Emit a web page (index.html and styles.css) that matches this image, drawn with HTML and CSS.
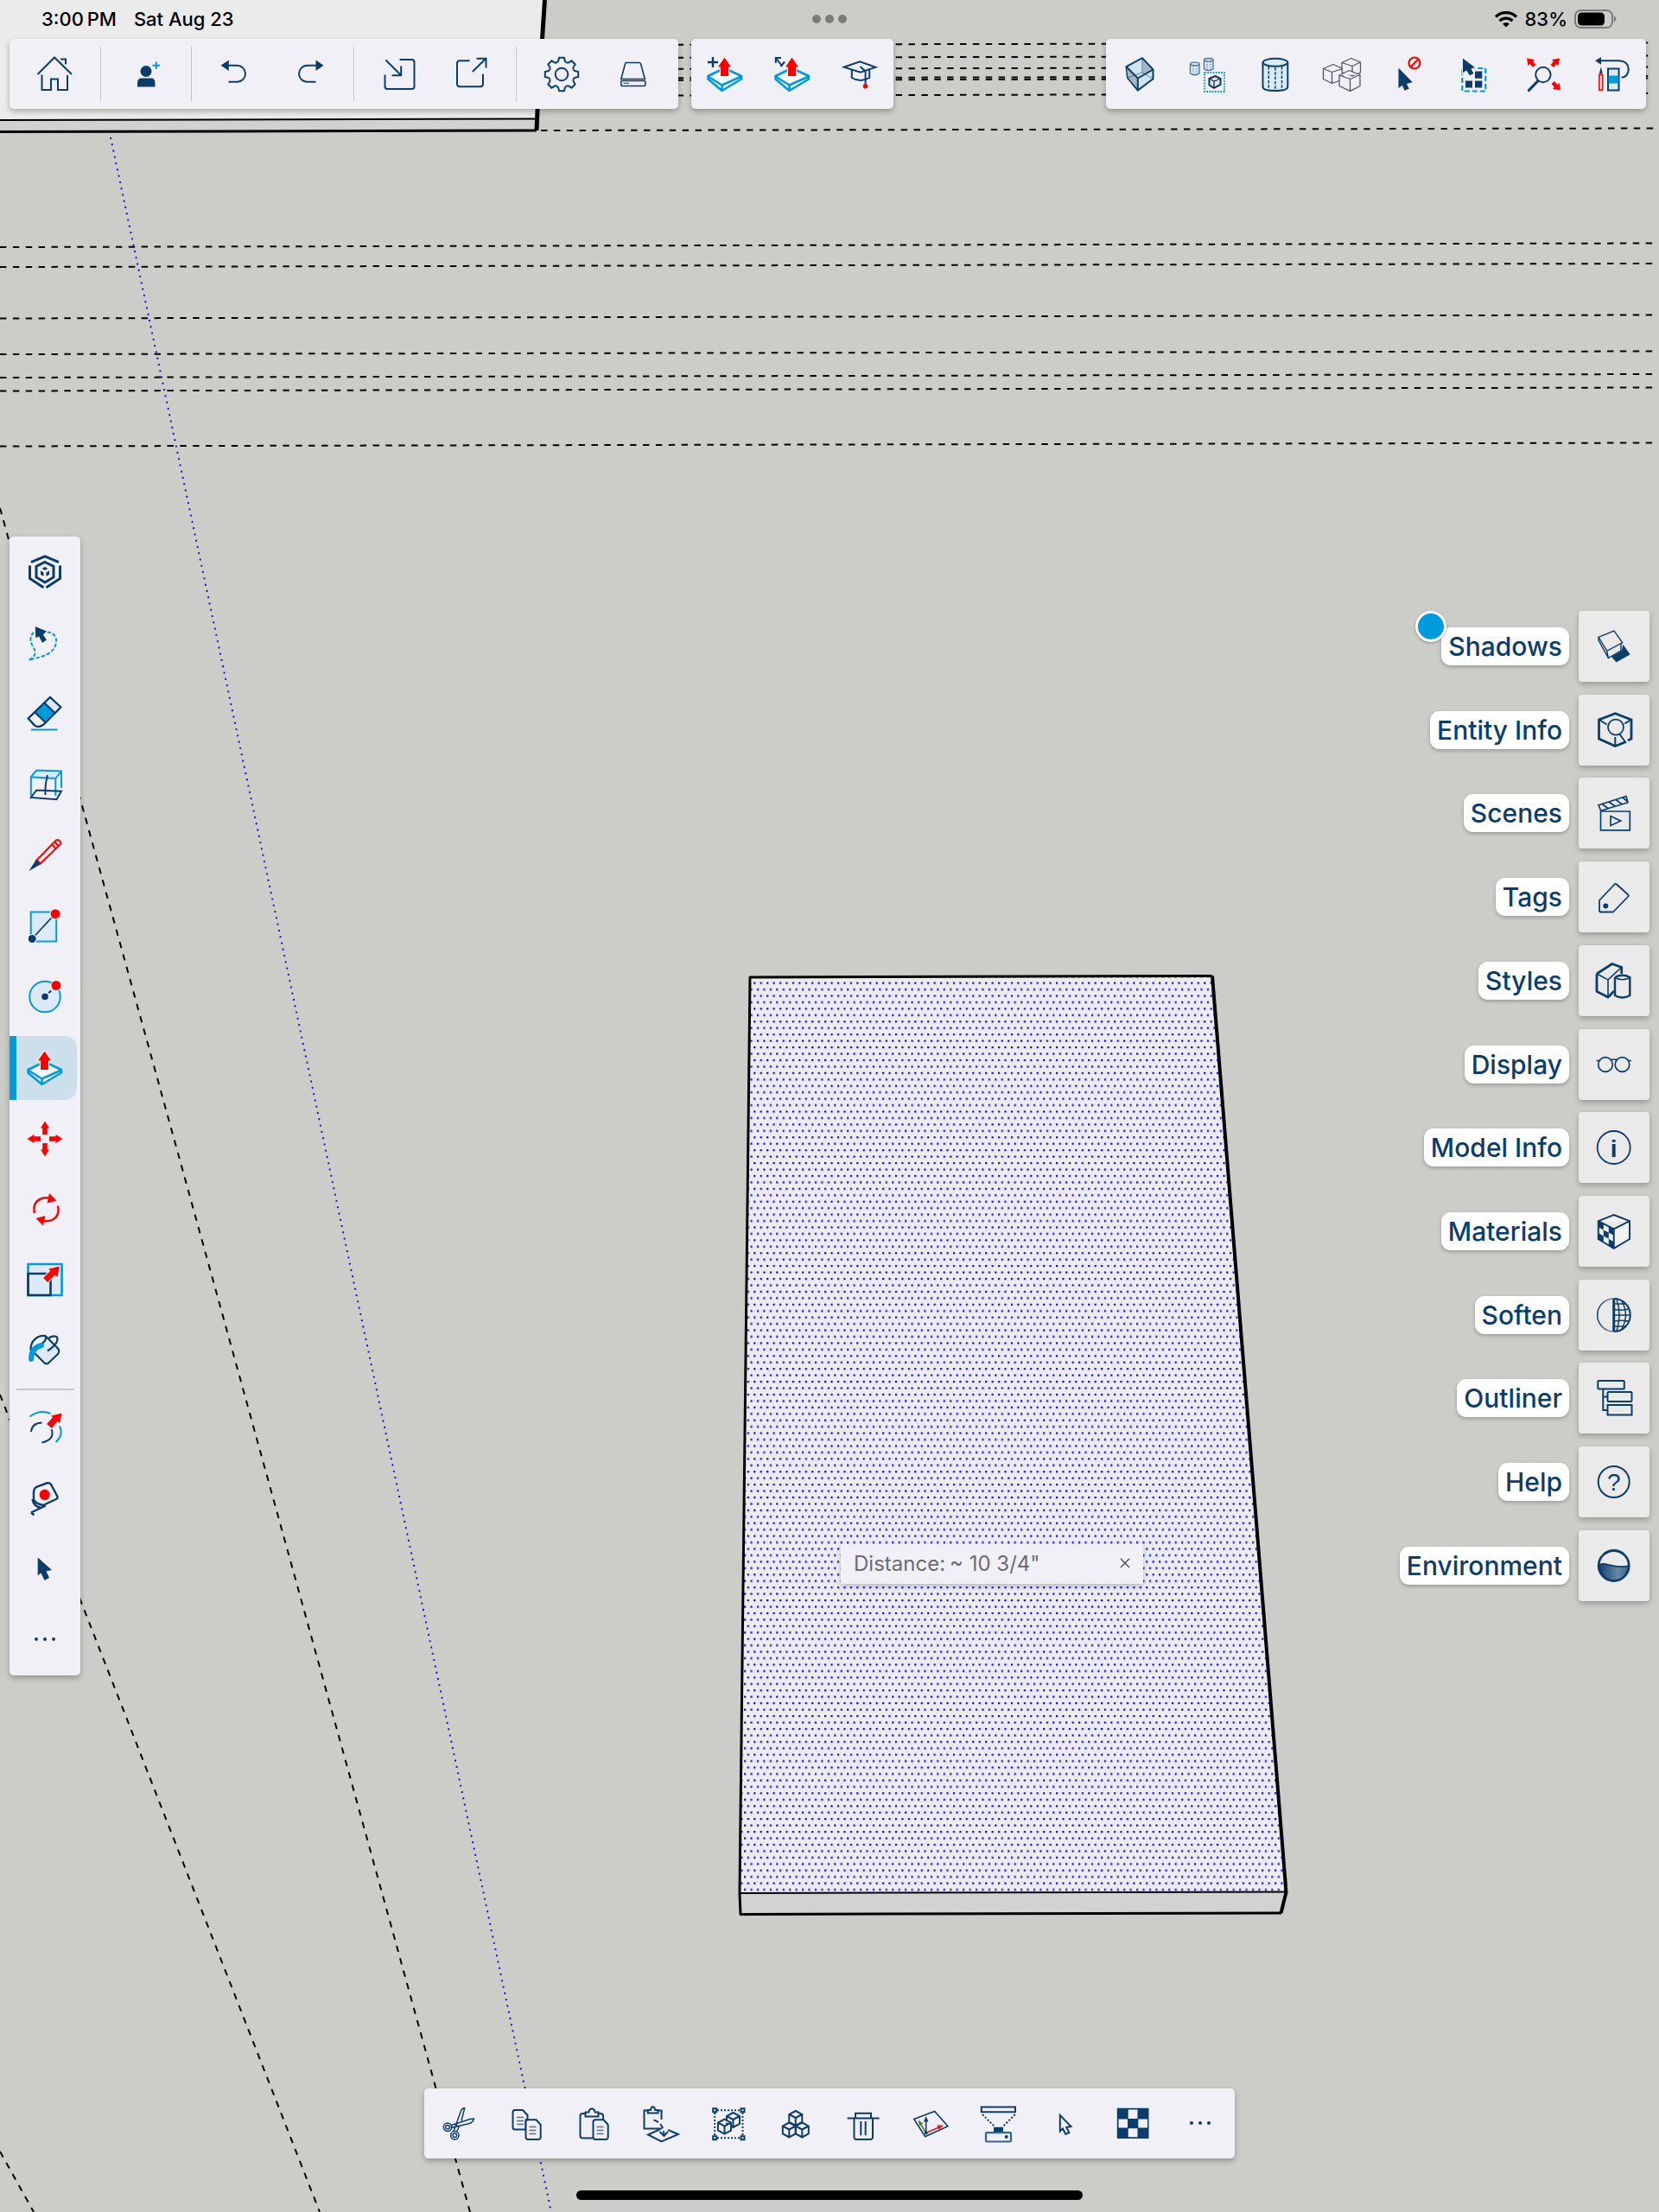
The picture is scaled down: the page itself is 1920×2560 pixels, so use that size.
FILE: index.html
```html
<!DOCTYPE html>
<html lang="en">
<head>
<meta charset="utf-8">
<meta name="viewport" content="width=device-width, initial-scale=1">
<title>Model editor</title>
<link rel="stylesheet" href="styles.css">
</head>
<body>
<svg class="defs" width="0" height="0" aria-hidden="true">
  <symbol id="push" viewBox="0 0 48 48">
    <path class="w" d="M4.5 26 24 18 43 26V29.500L20.500 43 4.500 29.500Z"/>
    <path class="sb" stroke-width="2.600" stroke-linejoin="round" d="M18 19.500 4.500 26V29.500L20.500 43 43 29.500V26L29 19.500M4.500 26.500 20.500 36.500 43 26.500M20.500 36.500V42"/>
    <path class="r halo" d="M23.500 4.500 31 15.500H28V26H19V15.500H16Z"/>
  </symbol>
  <symbol id="cube" viewBox="-10 -10 20 20" overflow="visible">
    <path d="M0-8.500 7.500-4.500V4.500L0 8.500-7.500 4.500V-4.500ZM-7.500-4.500 0-.5 7.500-4.500M0-.5V8.500"/>
  </symbol>
  <symbol id="dots" viewBox="0 0 48 48">
    <g class="n"><circle cx="14" cy="23" r="2"/><circle cx="24" cy="23" r="2"/><circle cx="34" cy="23" r="2"/></g>
  </symbol>
  <linearGradient id="sea" x1="0" y1="0" x2="1" y2="0"><stop offset="0" stop-color="#0c3d6a"/><stop offset=".6" stop-color="#6688a5"/><stop offset="1" stop-color="#3a6389"/></linearGradient>
  <linearGradient id="fade" x1="0" y1="0" x2="1" y2="0"><stop offset="0" stop-color="#0c3d6a"/><stop offset="1" stop-color="#0c3d6a" stop-opacity=".5"/></linearGradient>
</svg>

<div class="app">
  <svg class="scene" viewBox="0 0 1920 2560" preserveAspectRatio="none" aria-hidden="true">
    <defs>
      <pattern id="selection" patternUnits="userSpaceOnUse" x="872.200" y="1136.600" width="7.442" height="14.884">
        <rect x="0" y="0" width="2.200" height="2.200" fill="#0a00ff"/>
        <rect x="3.721" y="7.442" width="2.200" height="2.200" fill="#0a00ff"/>
      </pattern>
    </defs>
    <g class="guide">
      <path d="M620 52 1914 49.500M620 67 1914 64.500M620 80 1914 77.500M620 90.500 1914 88M620 93 1914 90.500M620 111 1914 108M626 151 1914 148.500"/>
      <path d="M0 286 1914 281.500M0 309 1914 305M0 368.500 1914 364.500M0 410 1914 406.500M0 437 1914 433M0 452.500 1914 448.500M0 516.500 1914 512.500"/>
      <path d="M0 588 544 2560M0 1614 370 2560M0 2490 39 2560"/>
    </g>
    <path class="axis" d="M128 159 638 2560"/>
    <path fill="#ebebeb" d="M0 0H631L622 138 0 139Z"/>
    <path fill="#d1d1d1" d="M0 139 622 138 621 151 0 153Z"/>
    <path class="edge thin" d="M0 139 622 137.500"/>
    <path class="edge" d="M0 152.500 621 151"/>
    <path class="edge thick" d="M630.500 0 622 128 621 151"/>
    <path fill="#d2d2d2" d="M856 2191H1489L1483 2214 857 2215Z"/>
    <path fill="#ececec" d="M868 1131 1403 1129.500 1488 2190 856 2191Z"/>
    <path fill="url(#selection)" d="M868 1131 1403 1129.500 1488 2190 856 2191Z"/>
    <path class="edge thin" d="M856 2191 1488 2189.500"/>
    <path class="edge" d="M1403 1129.500 868 1131 856 2191 857 2215.500 1483 2214"/>
    <path class="edge side" d="M1403 1129.500 1488.500 2190 1482.500 2214"/>
  </svg>

  <header class="status">
    <div class="clock"><time>3:00&#8201;PM</time><span>Sat Aug 23</span></div>
    <div class="multitask"><i></i><i></i><i></i></div>
    <div class="power">
      <svg width="28" height="20" viewBox="0 0 28 20" fill="none" stroke="#000" stroke-width="3.200" aria-hidden="true"><path d="M2 7.500A17 17 0 0 1 26 7.500M6.500 12A11 11 0 0 1 21.500 12"/><path fill="#000" stroke="none" d="M14 19.500 10 15.500A6 6 0 0 1 18 15.500Z"/></svg>
      <span>83%</span>
      <svg width="50" height="24" viewBox="0 0 50 24" aria-hidden="true"><rect x="1" y="2" width="43" height="20" rx="6.500" fill="none" stroke="#7b7c78" stroke-width="2"/><rect x="4" y="4.500" width="31" height="15" rx="4.500"/><path fill="#7b7c78" d="M46 8.500Q48.500 9.500 48.500 12T46 15.500Z"/></svg>
    </div>
  </header>

  <div class="topbars">
    <nav class="bar" aria-label="File">
      <div class="group">
        <button aria-label="Home"><svg class="i" viewBox="0 0 48 48"><path d="M3.500 24 23 4.500 43 24M30 6.500H36V12.500M8.500 24.500V42H19V29.500H27V42H38V25"/></svg></button>
      </div>
      <div class="group">
        <button aria-label="Invite"><svg class="i" viewBox="0 0 48 48"><g class="n"><circle cx="24" cy="20.500" r="6.500"/><path d="M14 38.500V34Q14 28.500 18.500 28.500H30Q34.500 28.500 34.500 34V38.500Z"/></g><path class="sb" d="M35.800 9.500V18M31.500 13.800H40"/></svg></button>
      </div>
      <div class="group">
        <button aria-label="Undo"><svg class="i" viewBox="0 0 48 48"><path class="n" d="M5.500 13.800 14.800 7.500V20Z"/><path d="M14 13.800H24.500A9.500 9.500 0 0 1 24.500 32.800H14.500"/></svg></button>
        <button aria-label="Redo"><svg class="i" viewBox="0 0 48 48"><path class="n" d="M41.500 13.800 32.500 7.500V20Z"/><path d="M33 13.800H22.500A9.500 9.500 0 0 0 22.500 32.800H32.500"/></svg></button>
      </div>
      <div class="group">
        <button aria-label="Import"><svg class="i" viewBox="0 0 48 48"><path d="M24.500 7H38.500A3 3 0 0 1 41.500 10V38A3 3 0 0 1 38.500 41H10.500A3 3 0 0 1 7.500 38V24.500M8.500 7.500 26 25M15.500 25.200H26.200V14.500"/></svg></button>
        <button aria-label="Export"><svg class="i" viewBox="0 0 48 48"><path d="M22.500 8.200H11A3 3 0 0 0 8 11.200V35.200A3 3 0 0 0 11 38.200H35A3 3 0 0 0 38 35.200V23.800M25.800 21 41 6M30.500 5.800H41.500V16.500"/></svg></button>
      </div>
      <div class="group">
        <button aria-label="Settings"><svg class="i" viewBox="-24 -24 48 48"><defs><path id="tooth" d="M-5.700-13.700Q-4-14.300-3.700-16L-2.900-19.200H2.900L3.700-16Q4-14.300 5.700-13.700"/></defs><use href="#tooth"/><use href="#tooth" transform="rotate(45)"/><use href="#tooth" transform="rotate(90)"/><use href="#tooth" transform="rotate(135)"/><use href="#tooth" transform="rotate(180)"/><use href="#tooth" transform="rotate(225)"/><use href="#tooth" transform="rotate(270)"/><use href="#tooth" transform="rotate(315)"/><circle r="7.300"/></svg></button>
        <button aria-label="Storage"><svg class="i" viewBox="0 0 48 48" stroke-width="1.600"><path d="M16 10.500H31Q32.300 10.500 32.600 12L37.400 29.500H9.800L14.500 12Q14.800 10.500 16 10.500Z"/><rect x="9.800" y="31.500" width="28" height="6" rx="1"/><path d="M12.500 34.300H19" stroke-width="1"/></svg></button>
      </div>
    </nav>
    <nav class="bar even" aria-label="Tool options">
      <button aria-label="Push new face"><svg class="i" viewBox="0 0 48 48"><path stroke-width="2.400" d="M10 4V16M4 10H16"/><use href="#push"/></svg></button>
      <button aria-label="Stretch"><svg class="i" viewBox="0 0 48 48"><path d="M4.800 11V5H11M4.800 5 11 13M15 9.500 10.500 15"/><use href="#push"/></svg></button>
      <button aria-label="Learn"><svg class="i" viewBox="0 0 48 48"><path d="M5.700 15.800 24.100 9.200 42.500 15.800 25 21.800ZM14.800 19.200V28Q19.500 31 25 31T35.200 28V19.200M24.500 15 30.600 20.500V36"/><circle class="r" cx="30.600" cy="37.800" r="2.800"/></svg></button>
    </nav>
    <nav class="bar even views" aria-label="Model tools">
      <button aria-label="X-ray"><svg class="i" viewBox="0 0 48 48"><path fill="#cfe3f1" d="M8.500 15.200 26.900 5.200 39.500 18.500V29.200L21.800 42.500 10 28Z"/><path fill="#a7b6c6" stroke="none" d="M9 16 21 28V40L10.500 28ZM27 7 38.500 19 28 24Z"/><path stroke-width="1" opacity=".6" d="M26.900 5.200V22L10 28M26.900 22 39.500 29.200"/><path d="M8.500 15.200 21.800 28.500 39.500 18.500M21.800 28.500V42.500"/></svg></button>
      <button aria-label="Hide similar"><svg class="i" viewBox="0 0 48 48" stroke-width="1.300"><g fill="#d9eaf6" stroke="#476f93"><path d="M4.500 12V23Q9.800 26.500 15 23V12M20.500 7.500V18Q25.800 21 31 18V7.500"/><ellipse cx="9.800" cy="12" rx="5.300" ry="1.800"/><ellipse cx="25.800" cy="7.300" rx="5.300" ry="1.800"/><path stroke-width=".8" stroke-dasharray="2 1" d="M8 14V24M12 14V24M24 9V20M28 9V20"/></g><rect class="sb" x="21" y="22" width="23" height="22" stroke-width="1.800" stroke-dasharray="1.800 1.400"/><path fill="#d9eaf6" stroke="#1d2c44" stroke-width="2" d="M33.500 26 39.500 29V36L32 39.800 26.500 36.500V29Z"/><path stroke="#1d2c44" d="M26.500 29 32 32 39.500 29M32 32V39.500"/></svg></button>
      <button aria-label="Hidden geometry"><svg class="i" viewBox="0 0 48 48"><path fill="#d9ebf7" d="M10.500 10.500V38.500Q10.500 43 24.900 43T39.300 38.500V10.500"/><ellipse fill="#d9ebf7" cx="24.900" cy="10.300" rx="14.400" ry="4.500"/><path stroke-width="1.500" stroke-dasharray="3.500 1.800" d="M17.300 15V42M24.900 16V42M32.500 15V42"/></svg></button>
      <button aria-label="Components"><svg class="i" viewBox="0 0 48 48" stroke="#55535f" stroke-width="1.300" stroke-linejoin="round"><path d="M2.500 17.500 14 12.500 25 17.500V30L12.500 34.500 2.500 29.500ZM2.500 17.500 12.500 21.500 25 17.500M12.500 21.500V34"/><path fill="#f1f0f6" d="M24 10.500 34.500 5.500 45.500 10V22L36 26 24 21.500ZM24 10.500 36 14.500 45.500 10M36 14.500V25"/><path fill="#f1f0f6" d="M21 25 32.500 19.500 45 24.500V37.500L33.500 43.300 21 37.500ZM21 25 33.500 29.500 45 24.500M33.500 29.500V43"/></svg></button>
      <button aria-label="Deselect"><svg class="i" viewBox="0 0 48 48"><path class="n" d="M11.500 16.500V40L15.800 36.800 18.500 42.800 23.800 40.800 21 35 27.800 33.300Z"/><g stroke="#f00" stroke-width="2.200"><circle cx="30" cy="11" r="6.500"/><path d="M34.500 6.500 25.500 15.500"/></g></svg></button>
      <button aria-label="Select all"><svg class="i" viewBox="0 0 48 48"><rect class="sb" x="7.300" y="17" width="27" height="26.500" stroke-width="2.200" stroke-dasharray="6 3"/><path class="n halo" d="M7.900 5.500V22.500L12 19.500 16 25.500 20.500 23 17.500 17.500 22 16Z"/><path class="n" d="M22 20.500H30.300V28.700H22ZM11 31.500H19V39.500H11ZM22 31.500H30.300V39.500H22Z"/></svg></button>
      <button aria-label="Zoom extents"><svg class="i" viewBox="0 0 48 48"><circle cx="22.900" cy="24.500" r="8.700"/><path stroke-width="3.200" stroke-linecap="round" d="M16.500 32 6.500 42.500"/><g class="r"><path id="ext" d="M4 5.500 13 7 11.200 9.200 14.500 13 10.800 16 7.800 12 5.500 14Z"/><use href="#ext" transform="matrix(-1 0 0 1 46 0)"/><use href="#ext" transform="matrix(-1 0 0 -1 47 48)"/></g></svg></button>
      <button aria-label="Draw and erase"><svg class="i" viewBox="0 0 48 48"><path class="n" d="M5 8.300 12 4V12.800Z"/><path d="M11 8.300H33Q43.500 9 43.800 17.800 43.500 27 35.500 27.800"/><path stroke="#f00" stroke-width="1.600" d="M9.900 24.500H13.600V42.300H9.900Z"/><path class="n" d="M11.800 15.500 13.800 23.500H9.700Z"/><rect fill="#d9eaf6" x="20" y="17.500" width="12.500" height="25"/><path class="b" d="M20.500 25.500H32V34.500H20.500Z"/></svg></button>
    </nav>
  </div>

  <main class="middle">
    <nav class="bar tools" aria-label="Tools">
      <button aria-label="Search"><svg class="i" viewBox="0 0 48 48" stroke-width="3"><path d="M8 12.700 24 5.800 40 12.700M6.500 16.500V31.500L22.500 42M41.500 16.500V31.500L25.500 42M24 12.500 34 17.500V30L24 36 14 30V17.500Z"/><path class="n" d="M24 18 27.500 20 24 22 20.500 20ZM19 22.500 22.500 24.500V29L19 27ZM29 22.500 25.500 24.500V29L29 27Z"/></svg></button>
      <button aria-label="Lasso"><svg class="i" viewBox="0 0 48 48"><path class="sb" stroke-dasharray="4.500 2" d="M26.500 11.500C40 12 40 28 30 35 22 41 14 41 5.500 44 17 37 12 32 9 26 6.500 20 7 16 11 12"/><path class="n halo" d="M12.700 4.900 13.300 18.500 17 16.500 21 24 26 20.500 22 14.500 26 10.500Z"/></svg></button>
      <button aria-label="Eraser"><svg class="i" viewBox="0 0 48 48"><path fill="#f1f0f6" d="M4.700 29.500 30 5 42.300 16.500 24 35Q17 41.500 12 37.500Z"/><path fill="#dbeaf6" stroke="none" d="M24 10.800 30 5.800 41 16.500 35.500 22Z"/><path class="b" d="M12.500 22.500 23.500 11.500 35.500 23 25.500 33.500Q21 33 12.500 22.500Z"/><path d="M12.500 22.500 24.500 34M23.500 11.500 35.500 23M4.700 29.500 30 5 42.300 16.500 24 35Q17 41.500 12 37.500Z"/><path class="sb" d="M8 42.500H38.500"/></svg></button>
      <button aria-label="Section"><svg class="i" viewBox="0 0 48 48"><path class="l" d="M8 15.500 14.300 7.500 43 8.500 36.300 17Z"/><g class="sb"><path d="M7.800 37V15.200L14.300 7.500 43 8.500V28M7.800 15.200 36.300 17V37M36.300 17 43 8.500"/></g><path d="M7.700 39 14.300 30.500 43 31.700 37.500 41.200ZM24.500 36Q24 24 27 13"/></svg></button>
      <button aria-label="Line"><svg class="i" viewBox="0 0 48 48"><path stroke="#f00" d="M14.500 29.500 36 7.300Q38.500 5 41 7.300T41.500 11.500L18.700 33.500ZM32 11 36 15.500M35 8 39 12.500"/><path class="n" d="M5.500 42 14 28.500 19.500 34Z"/></svg></button>
      <button aria-label="Rectangle"><svg class="i" viewBox="0 0 48 48"><rect class="l sb" x="7.700" y="7.500" width="29.500" height="34"/><path stroke-width="1.800" d="M9 38.500 36 9.500"/><circle class="n halo" cx="9.200" cy="38.500" r="4.500"/><circle class="r halo" cx="36" cy="9.700" r="5.500"/></svg></button>
      <button aria-label="Circle"><svg class="i" viewBox="0 0 48 48"><circle class="l sb" cx="24" cy="23.500" r="17.800"/><path stroke-dasharray="4 2" d="M24 23.500 37 10.500"/><circle class="n" cx="24" cy="23.500" r="3.800"/><circle class="r halo" cx="37" cy="10.500" r="5.500"/></svg></button>
      <button class="active" aria-label="Push/Pull" aria-pressed="true"><svg class="i" viewBox="0 0 48 48"><use href="#push"/></svg></button>
      <button aria-label="Move"><svg class="i" viewBox="-24 -24 48 48"><g class="r"><path id="mv" d="M0-20.500 5-12.500H2.800V-5H-2.800V-12.500H-5Z"/><use href="#mv" transform="rotate(90)"/><use href="#mv" transform="rotate(180)"/><use href="#mv" transform="rotate(270)"/></g></svg></button>
      <button aria-label="Rotate"><svg class="i" viewBox="0 0 48 48"><g id="rot"><path stroke="#f00" stroke-width="2.400" d="M12 28Q9 14 22 10.500 26 9.600 29 10.800"/><path class="r" d="M29 5 37.500 13.500 26.500 16.500Z"/></g><use href="#rot" transform="rotate(180 25.500 23.700)"/></svg></button>
      <button aria-label="Scale"><svg class="i" viewBox="0 0 48 48" stroke-width="2.600"><path class="l sb" d="M4.500 5H43.500V41H4.500Z"/><path d="M4.500 16H30.500V41H4.500Z"/><path class="r halo" d="M41 7.500 38.500 20 35.800 17.500 27 26 22 21 30.500 12.500 28 10.500Z"/></svg></button>
      <button aria-label="Paint"><svg class="i" viewBox="0 0 48 48"><path class="l" d="M11 23 25 7 40 22 25 38Z"/><path stroke-width="2.200" d="M7.500 23C7 11 16 5 24.500 6L39 20.500Q41.500 24 39 27L28 37.500Q26 39 23.500 37.500L12 26M24 6Q28 10 18 17M27.500 9.500Q32 5 37.500 7 42 13 27 23.500"/><path stroke="#009bdc" stroke-width="6" stroke-linecap="round" d="M8 33Q8 20 20 17"/></svg></button>
      <hr>
      <button aria-label="Offset"><svg class="i" viewBox="0 0 48 48"><path class="sb" d="M6.500 11.500Q18.500 2.500 30.500 8M41 22.500Q46 33 36.500 41"/><path d="M8 29Q9 19 20.500 18.500M31.500 26Q36 38 20.500 41.500"/><path class="r halo" d="M43.500 7.500 41.500 19 38.500 17 32 25 26 20 33 12.500 31 10.500Z"/></svg></button>
      <button aria-label="Tape measure"><svg class="i" viewBox="0 0 48 48"><path stroke-width="2.400" d="M11 25V17Q11 12.500 15 10.500L26 6.500Q29 5.500 31 8L38.500 22Q39 24 37 25L22 32Q12 30 11 25ZM9.500 25Q11 34 20 35M8 40.500 25 32.500M8 40.500 11.500 43.500"/><ellipse class="r" cx="23.700" cy="20" rx="6" ry="6.200"/></svg></button>
      <button aria-label="Select"><svg class="i" viewBox="0 0 48 48"><path class="n" d="M15.700 10.500V31.500L19.300 28.500 23.500 37 29 34 25.500 26.500 32 25Z"/></svg></button>
      <button aria-label="More tools"><svg class="i" viewBox="0 0 48 48"><use href="#dots"/></svg></button>
    </nav>

    <section class="panels" aria-label="Panels">
      <div class="panel"><label for="p1">Shadows<i class="badge"></i></label><button id="p1"><svg class="i" viewBox="0 0 48 48" stroke-width="1.400"><path d="M6 13.300 24 6 33.700 19.800 15.700 29.400ZM6 13.300V17L17.300 37.500 32 29V20M15.700 29.400 17.300 37.500"/><path class="n" d="M21 36 32.500 29.500 34.500 22 42.500 33.500 26.500 42.500Z"/></svg></button></div>
      <div class="panel"><label for="p2">Entity Info</label><button id="p2"><svg class="i" viewBox="0 0 48 48"><path stroke-width="2.800" d="M36.500 38 25.300 42.500 6.500 34V12L25.300 4.800 44 12V34L40 36"/><path d="M7 12 15.500 17.500M43.500 12 36.500 16.300M25.300 32V42M30.300 28.500 38 39"/><circle cx="26" cy="20.600" r="9" stroke-width="1.800"/></svg></button></div>
      <div class="panel"><label for="p3">Scenes</label><button id="p3"><svg class="i" viewBox="0 0 48 48" stroke-width="1.700"><path d="M6 14.800 38 4.500 40 11.800 8.700 21.300ZM10 13.500 17 18.500M18 11 25 16M26 8.500 33 13.500M34 6 40 11M8.500 22H42.300V43.800H8.500ZM20 27.500V38.500L31.700 33Z"/></svg></button></div>
      <div class="panel"><label for="p4">Tags</label><button id="p4"><svg class="i" viewBox="0 0 48 48" stroke-width="1.800"><path stroke-linejoin="round" d="M8.500 41.500Q7 41.500 7 40V28L24.500 9.500Q25.700 8.300 27 9.500L40.300 21.500Q41.200 22.500 40.300 23.500L23 41.500Z"/><circle class="n" cx="14.300" cy="34.500" r="3"/></svg></button></div>
      <div class="panel"><label for="p5">Styles</label><button id="p5"><svg class="i" viewBox="0 0 48 48" stroke-width="2.800"><path d="M4 16 21.700 4.500 32.700 8.500V16M24 36 17 43 4 36.500V16"/><path stroke-width="1.600" d="M4 16 17 22.900V43M17 22.900 32.500 8.500"/><path d="M25 20V41Q33.500 46 42.300 41V20Q33.500 15.500 25 20" stroke-width="2.400"/><path stroke-width="1.600" d="M25 20.500Q33.500 25 42.300 20.500"/></svg></button></div>
      <div class="panel"><label for="p6">Display</label><button id="p6"><svg class="i" viewBox="0 0 48 48" stroke-width="1.700"><circle cx="14" cy="24" r="8.300"/><circle cx="33.500" cy="24" r="8.300"/><path d="M3.500 19.500H7M40.500 19.500H44M20 19Q23.700 17 27.500 19"/></svg></button></div>
      <div class="panel"><label for="p7">Model Info</label><button id="p7"><svg class="i" viewBox="0 0 48 48" stroke-width="1.800"><circle cx="23.700" cy="24" r="19"/><text class="glyph bold" x="23.700" y="35">i</text></svg></button></div>
      <div class="panel"><label for="p8">Materials</label><button id="p8"><svg class="i" viewBox="0 0 48 48"><path fill="#fff" fill-opacity=".4" d="M23.700 5 42 12.100V33L23.700 43.900 5.800 33V12.100ZM5.800 12.100 23.700 21.300 42 12.100M23.700 21.300V43.500"/><path class="n" d="M5.800 12 11.800 15.200V22.500L5.800 19.200ZM17.800 18.300 23.700 21.300V28.800L17.800 25.500ZM11.800 22.500 17.800 25.500V32.800L11.800 29.500ZM5.800 26 11.800 29.500V36.700L5.800 33ZM17.800 32.800 23.700 36.300V43.900L17.800 40.300Z"/></svg></button></div>
      <div class="panel"><label for="p9">Soften</label><button id="p9"><svg class="i" viewBox="0 0 48 48" stroke-width="1.500"><path stroke="url(#fade)" d="M23.700 5A19 19 0 0 0 23.700 43"/><path stroke-width="2" d="M23.700 5A19 19 0 0 1 23.700 43"/><path stroke-width="3" d="M23.700 5V43"/><path d="M27 5.500Q33 24 27 42.500M33 8Q42 24 33 40M24 11H37M24 17.500Q33 19 41 17M24 24H42.500M24 31Q33 29.500 41 31M24 37H37"/></svg></button></div>
      <div class="panel"><label for="p10">Outliner</label><button id="p10"><svg class="i" viewBox="0 0 48 48"><rect x="5.300" y="4" width="30.500" height="9.500" rx="1"/><rect x="16.500" y="17" width="28" height="11" rx="1"/><rect x="16.500" y="32" width="28" height="11.500"/><path d="M11.300 13.500V38H16.500M11.300 22.500H16.500"/></svg></button></div>
      <div class="panel"><label for="p11">Help</label><button id="p11"><svg class="i" viewBox="0 0 48 48"><circle cx="23.700" cy="24" r="18"/><text class="glyph" x="23.700" y="34">?</text></svg></button></div>
      <div class="panel"><label for="p12">Environment</label><button id="p12"><svg class="i" viewBox="0 0 48 48"><path fill="url(#sea)" stroke="none" d="M6 23.500C14 18 24 29 42 24A18 18 0 0 1 6 24Z"/><path stroke-width="1.800" d="M6 23.500C14 18 24 29 42 24"/><circle cx="23.700" cy="24" r="17.500" stroke-width="2.800"/></svg></button></div>
    </section>
  </main>

  <form class="measure">
    <label for="distance">Distance:</label>
    <input id="distance" type="text" value="~ 10 3/4&quot;">
    <button type="button" aria-label="Close"><svg width="12" height="12" viewBox="0 0 12 12" fill="none" stroke="#4b4955" stroke-width="1.400"><path d="M1 1 11 11M11 1 1 11"/></svg></button>
  </form>

  <footer class="bottom">
    <nav class="bar even edit" aria-label="Edit">
      <button aria-label="Cut"><svg class="i" viewBox="0 0 48 48" stroke-width="1.500"><circle cx="11" cy="27.800" r="4.700"/><circle cx="11" cy="27.800" r="2.300"/><circle cx="19.300" cy="37.300" r="4.700"/><circle cx="19.300" cy="37.300" r="2.300"/><path d="M15.500 25.500 37 18.500 41.500 18Q40.500 22 36.500 23.500L15.500 28.500ZM17.800 33 26.500 9Q28 5.500 30.700 5.800L27 20.500M24.500 27 21.500 33M21 24 22.500 27"/></svg></button>
      <button aria-label="Copy"><svg class="i" viewBox="0 0 48 48"><path d="M20 8H11A2.500 2.500 0 0 0 8.500 10.500V28A2.500 2.500 0 0 0 11 30.500H23.500V19.300H25.500V14Z"/><g id="doc"><path fill="#f1f0f6" d="M26 19.300H35.500L40.700 25V39.500A2.500 2.500 0 0 1 38.200 42H26A2.500 2.500 0 0 1 23.500 39.500V21.800A2.500 2.500 0 0 1 26 19.300Z"/><path stroke-width="1.400" opacity=".7" d="M27.500 27.500H35.500M27.500 31.500H35.500M27.500 35.500H35.500"/></g><path stroke-width="1.400" opacity=".7" d="M13 16.500H21M13 20.500H21M13 24.500H21"/></svg></button>
      <button aria-label="Paste"><svg class="i" viewBox="0 0 48 48"><path d="M14 12H11.500A3 3 0 0 0 8.500 15V37.500A3 3 0 0 0 11.500 40.500H23.500M29.500 12H32A3 3 0 0 1 35 15V19M14.500 15.500V10.500H18.500Q19 6.500 22 6.500T25.500 10.500H29.500V15.500Z"/><use href="#doc"/></svg></button>
      <button aria-label="Paste in place"><svg class="i" viewBox="0 0 48 48"><path d="M8.500 8.500H4.500V29.500H25M20.500 8.500H24.500V19M8.800 11.500V8H12Q12.500 4.300 14.500 4.300T17.300 8H20.500V11.500ZM22.500 30.500 9 36.500 24.500 44.500 44 36 32 31"/><path stroke-dasharray="6 3" d="M15.500 19.500Q27 23 27.500 37"/><path d="M22.500 33 27.500 38 32 33"/></svg></button>
      <button aria-label="Group"><svg class="i" viewBox="0 0 48 48"><path stroke-dasharray="2 2" d="M11 8.200H38M11 40.200H38M8.200 11V38M40.500 11V38"/><path fill="#f1f0f6" d="M6.200 6.200H10.200V10.200H6.200ZM38.500 6.200H42.500V10.200H38.500ZM6.200 38.200H10.200V42.200H6.200ZM38.500 38.200H42.500V42.200H38.500Z"/><g fill="#f1f0f6"><use href="#cube" x="19.500" y="9.500" width="20" height="20"/><use href="#cube" x="9.500" y="17.200" width="20" height="20"/></g></svg></button>
      <button aria-label="Make component"><svg class="i" viewBox="0 0 48 48"><use href="#cube" x="13.800" y="7.500" width="20" height="20"/><use href="#cube" x="6.300" y="21" width="20" height="20"/><use href="#cube" x="21.300" y="21" width="20" height="20"/></svg></button>
      <button aria-label="Delete"><svg class="i" viewBox="0 0 48 48"><path d="M15 17.500V11.700H33V17.500M5.500 17.500H42.700M13.500 17.500V39.500A2.500 2.500 0 0 0 16 42H32.500A2.500 2.500 0 0 0 35 39.500V17.500M21.300 21V37.200M26.700 21V37.200"/></svg></button>
      <button aria-label="Axes"><svg class="i" viewBox="0 0 48 48" stroke-width="1.600"><path d="M4.700 18.500 28.700 9.500 44 26.800 17.700 38.800Z"/><path d="M18.700 34.500V18"/><path stroke="#457f1b" d="M18.700 34.500 11 22"/><path stroke="#d81a1a" d="M18.700 34.500 36 27"/><path class="n" d="M18.700 15 21.500 21.500H16ZM18.700 32.500A2 2 0 1 1 18.600 32.500Z"/><path fill="#457f1b" stroke="none" d="M9.500 19.500 15.300 23.500 11 26Z"/><path fill="#d81a1a" stroke="none" d="M39 25.500 33.500 30.800 31.500 25.500Z"/></svg></button>
      <button aria-label="Scan"><svg class="i" viewBox="0 0 48 48"><path d="M4.800 4.500H44V10.300H4.800Z"/><path stroke-width="2.300" stroke-linecap="round" stroke-dasharray=".1 4" d="M6.700 13.800 18.700 25.800M43 13.800 31 25.800"/><path class="n" d="M19 27.800H30V34H19Z"/><rect x="10" y="34.200" width="29" height="10.300" rx="1" stroke="#33628b" stroke-width="2.200"/><circle class="n" cx="33.700" cy="39" r="2"/></svg></button>
      <button aria-label="Pointer"><svg class="i" viewBox="0 0 48 48"><path d="M17.800 14V32.500L21 29.500 24.300 36 28.300 34.200 25.200 28 30.500 27Z"/></svg></button>
      <button aria-label="Materials"><svg class="i" viewBox="0 0 48 48"><path class="n" d="M5.800 5.800H42.500V41H5.800Z"/><path fill="#f1f0f6" stroke="none" d="M18.700 7.500H29.500V18H18.700ZM7.500 18.500H18V28.500H7.500ZM30.300 18.500H41V28.500H30.300ZM18.700 29.300H29.500V39.300H18.700Z"/></svg></button>
      <button aria-label="More actions"><svg class="i" viewBox="0 0 48 48"><use href="#dots"/></svg></button>
    </nav>
    <div class="home"></div>
  </footer>
</div>
</body>
</html>
```
FILE: styles.css
```css
:root {
  --navy: #0c3d6a;
  --blue: #009bdc;
  --bar: #f1f0f6;
  --ground: #cccdc8;
}

* { box-sizing: border-box; }

body {
  margin: 0;
  background: var(--ground);
  font-family: Inter, "Liberation Sans", sans-serif;
}

button {
  padding: 0;
  border: 0;
  background: none;
  display: flex;
  align-items: center;
  justify-content: center;
}

.defs { position: absolute; }

.app {
  position: relative;
  min-height: 100vh;
  display: flex;
  flex-direction: column;
  overflow: hidden;
}

/* 3D view behind the toolbars */
.scene {
  position: absolute;
  inset: 0;
  width: 100%;
  height: 100%;
  fill: none;
}
.guide { stroke: #000; stroke-width: 2; stroke-dasharray: 7.44 7.44; }
.axis { stroke: #1a10c8; stroke-width: 2; stroke-dasharray: 2 5.44; }
.edge { stroke: #000; stroke-width: 3; stroke-linejoin: round; }
.edge.thin { stroke-width: 2; }
.edge.side { stroke-width: 4; }
.edge.thick { stroke-width: 5; }

.status, .topbars, .middle, .bottom { position: relative; }

/* status bar */
.status {
  height: 45px;
  padding: 0 48px 2px;
  display: grid;
  grid-template-columns: 1fr auto 1fr;
  align-items: center;
  font-size: 22px;
  font-weight: 500;
}
.clock { display: flex; gap: 20px; }
.multitask { display: flex; gap: 5px; }
.multitask i { width: 10px; height: 10px; border-radius: 50%; background: #7b7c77; }
.power { display: flex; align-items: center; justify-content: flex-end; gap: 8px; }

/* toolbars */
.bar {
  background: var(--bar);
  border-radius: 5px;
  box-shadow: 0 3px 6px rgba(0, 0, 0, .28);
  display: flex;
}
.topbars {
  display: flex;
  gap: 15px;
  padding: 0 15px 0 11px;
}
.topbars .bar, .edit { height: 81px; }
.group {
  display: flex;
  padding: 0 11px;
  align-items: center;
  position: relative;
}
.group button { width: 83px; height: 81px; }
.group + .group::before {
  content: "";
  position: absolute;
  left: 0;
  top: 9px;
  bottom: 9px;
  width: 1px;
  background: #c6c6ca;
}
.even button { width: 78px; height: 81px; }
.views { margin-left: auto; padding-right: 1px; }

.i {
  width: 48px;
  height: 48px;
  fill: none;
  stroke: var(--navy);
  display: block;
}
.i:not([stroke-width]) { stroke-width: 2; }
.i[stroke] { stroke: #55535f; }
.n { fill: var(--navy); stroke: none; }
.r { fill: #f00; stroke: none; }
.b { fill: var(--blue); stroke: none; }
.w { fill: #f4f7fb; stroke: none; }
.l { fill: #dbeaf6; stroke: none; }
.sb { stroke: var(--blue); }
.halo { stroke: #fff; stroke-width: 2; paint-order: stroke; }
.glyph { fill: var(--navy); stroke: none; font-size: 28px; font-weight: 500; text-anchor: middle; }
.glyph.bold { font-weight: 700; }

/* side columns */
.middle {
  flex: 1;
  display: flex;
  justify-content: space-between;
  align-items: center;
  padding: 17px 11px 0;
}
.tools { flex-direction: column; width: 82px; }
.tools button { width: 82px; height: 82px; }
.tools hr { width: 67px; height: 2px; margin: 2px auto; border: 0; background: #c6c6ca; }
.tools .active {
  width: 78px;
  height: 74px;
  margin: 4px 0;
  border-left: 8px solid var(--blue);
  border-radius: 0 14px 14px 0;
  background: #cddfeb;
  padding-right: 4px;
}

.panels {
  display: flex;
  flex-direction: column;
  justify-content: space-between;
  height: 1146px;
}
.panel { display: flex; align-items: center; justify-content: flex-end; gap: 11px; }
.panel label {
  position: relative;
  height: 44px;
  line-height: 44px;
  padding: 0 8px;
  border-radius: 11px;
  background: #fff;
  box-shadow: 0 2px 4px rgba(0, 0, 0, .25);
  color: var(--navy);
  font-size: 30px;
  font-weight: 500;
}
.panel button {
  width: 82px;
  height: 82px;
  border-radius: 4px;
  background: #eaeaea;
  box-shadow: 0 3px 6px rgba(0, 0, 0, .25);
}
.badge {
  position: absolute;
  left: -30px;
  top: -19px;
  width: 36px;
  height: 36px;
  border: 3px solid #fff;
  border-radius: 50%;
  background: var(--blue);
  box-shadow: 0 1px 3px rgba(0, 0, 0, .35);
}

/* measurement box floating over the model */
.measure {
  position: absolute;
  left: 973px;
  top: 1787px;
  width: 350px;
  height: 46px;
  padding: 0 14px 2px 15px;
  display: flex;
  align-items: center;
  gap: 5px;
  background: var(--bar);
  box-shadow: 0 3px 6px rgba(0, 0, 0, .2);
  color: #6b6a76;
  font-size: 24px;
}
.measure input {
  flex: 1;
  min-width: 0;
  padding: 0;
  border: 0;
  background: none;
  color: inherit;
  font: inherit;
}
.measure button { width: 14px; height: 14px; }

.bottom {
  display: flex;
  flex-direction: column;
  align-items: center;
  padding-bottom: 14px;
}
.edit { padding: 0 1px; }
.home {
  width: 586px;
  height: 11px;
  margin-top: 37px;
  border-radius: 6px;
  background: #000;
}
```
